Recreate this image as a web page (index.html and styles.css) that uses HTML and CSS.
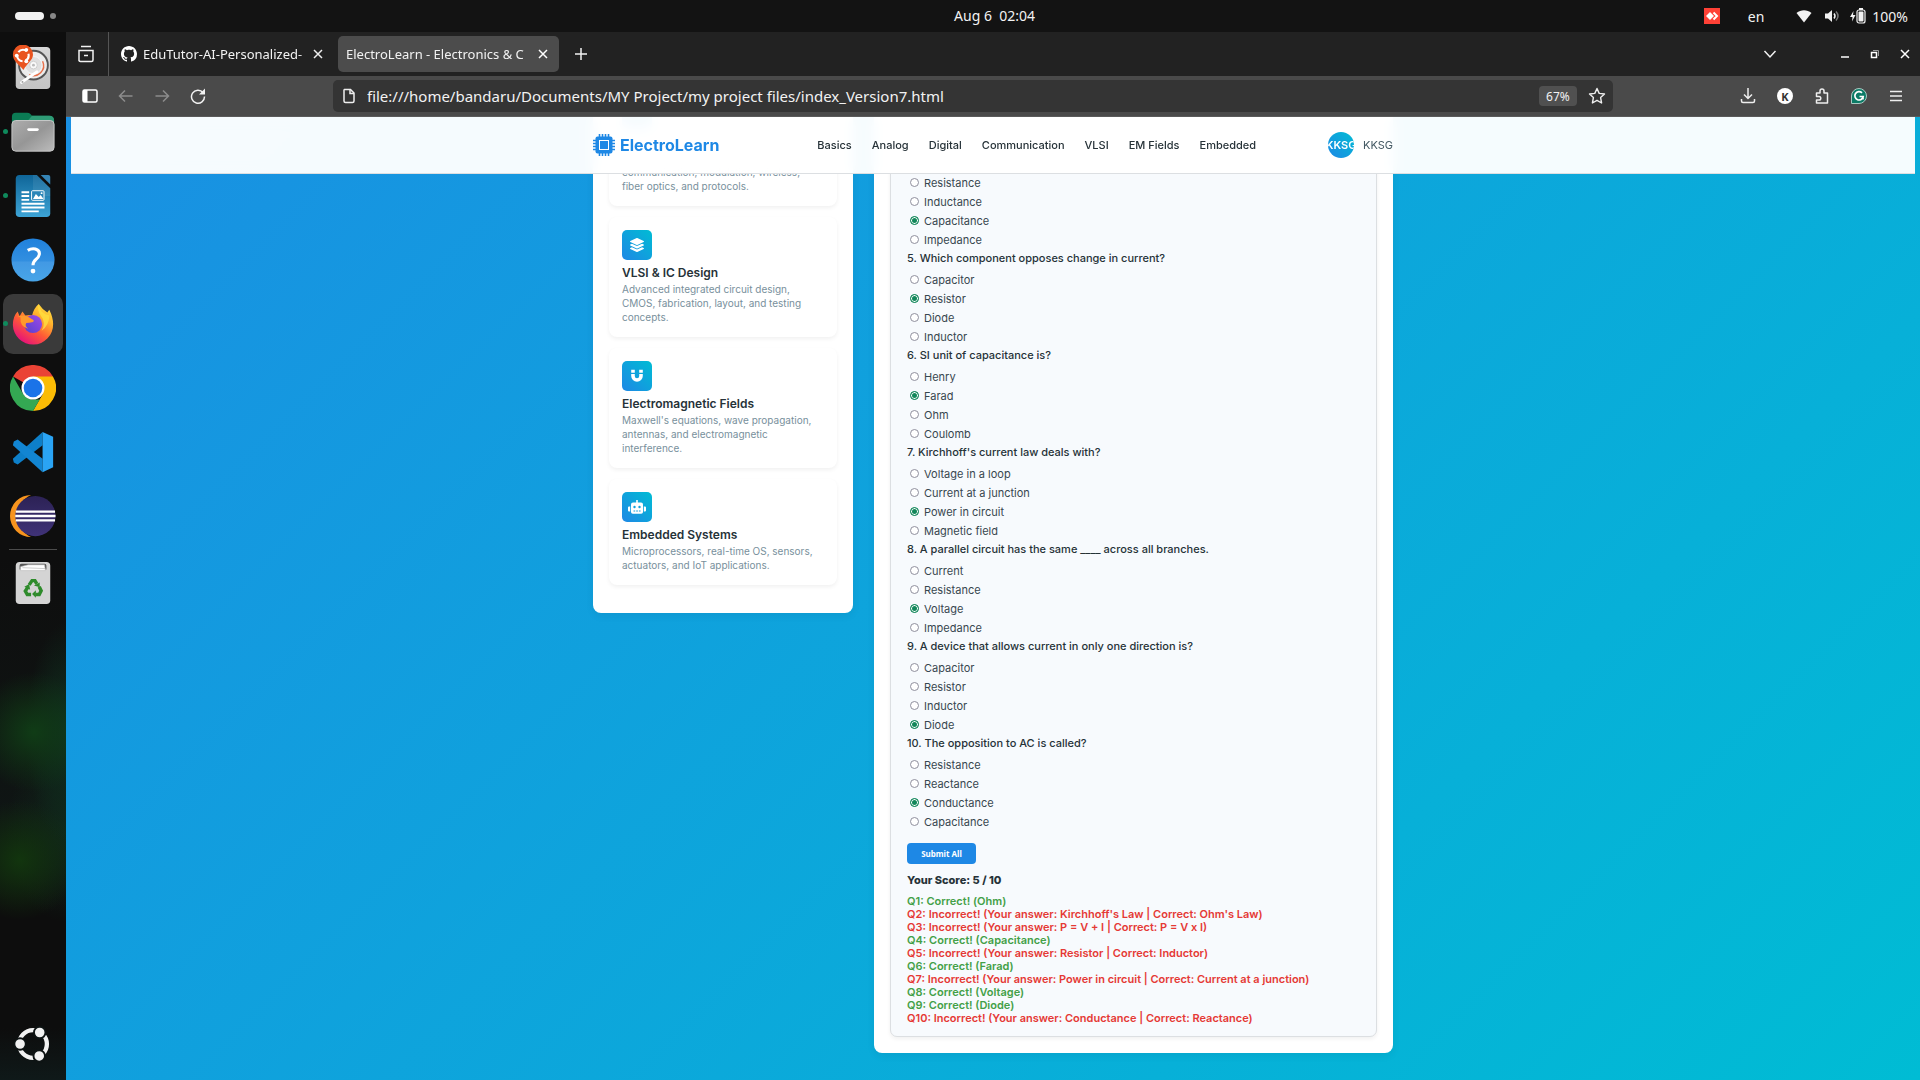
FILE: index.html
```html
<!DOCTYPE html>
<html lang="en">
<head>
<meta charset="utf-8">
<title>ElectroLearn - Electronics &amp; Communication</title>
<link rel="stylesheet" href="styles.css">
</head>
<body>
<div class="topbar">
  <button class="workspaces" aria-label="Workspaces"><span class="pill"></span><span class="dot"></span></button>
  <time class="clock">Aug 6 &nbsp;02:04</time>
  <div class="tray">
    <svg class="tray-app" width="16" height="16" viewBox="0 0 16 16"><path fill="#ff4136" d="M0 0h16v16H0z"/><path fill="#fff" d="M6 4l4 4-4 4-4-4z"/><path fill="none" stroke="#fff" stroke-width="2" d="M9.500 4.500L13 8l-3.500 3.500"/></svg>
    <span class="lang">en</span>
    <svg width="16" height="16" viewBox="0 0 16 16"><path fill="#f2f2f2" d="M.5 5C5 1.300 11 1.300 15.500 5L8 14.500z"/></svg>
    <svg class="volume" width="16" height="16" viewBox="0 0 16 16"><path fill="#f2f2f2" d="M1 5.500h3L8 2v12L4 10.500H1z"/><path fill="none" stroke="#f2f2f2" stroke-width="1.500" d="M10 5.500q2 2.500 0 5"/><path fill="none" stroke="#777" stroke-width="1.500" d="M12 3.500q4 4.500 0 9"/></svg>
    <svg class="battery" width="16" height="16" viewBox="0 0 16 16"><path fill="#f2f2f2" d="M3.500 3L0 9h2.500L2 13.500 5.500 7H3z"/><rect x="7" y="2" width="8" height="13" rx="2" fill="none" stroke="#f2f2f2" stroke-width="1.200"/><rect x="8.500" y="3.500" width="5" height="10" rx="1" fill="#f2f2f2"/><path fill="#f2f2f2" d="M9 0h4v2H9z"/></svg>
    <span class="percent">100%</span>
  </div>
</div>
<div class="desktop">
  <nav class="dock" aria-label="Dock">
    <button class="dock-item" aria-label="Disk"><svg width="48" height="48" viewBox="0 0 48 48"><defs><linearGradient id="metal" x2="0" y2="1"><stop stop-color="#d6d6d6"/><stop offset="1" stop-color="#c4c4c4"/></linearGradient></defs><rect x="6" y="2" width="36" height="44" rx="4" fill="url(#metal)"/><circle cx="24.500" cy="21" r="15" fill="#ececec" stroke="#555" stroke-width="2"/><circle cx="24.500" cy="21" r="9" fill="#e0e0e0" stroke="#f5f5f5"/><path d="M34 17a10.500 10.500 0 0 1-14 14" fill="none" stroke="#e9704a" stroke-width="1.500"/><circle cx="24.500" cy="21" r="4" fill="#fafafa" stroke="#ccc"/><circle cx="24.500" cy="21" r="1.500" fill="#bbb"/><path d="M12 39l16-11" stroke="#fff" stroke-width="3" stroke-linecap="round"/><circle cx="13" cy="38.500" r="1" fill="#999"/><path d="M14 26C9 20 3 17 3 10a10.500 10.500 0 0 1 21 0c0 6-6 9-10 16z" fill="#e95420"/><circle cx="13.500" cy="11" r="6" fill="none" stroke="#fff" stroke-width="2.200" stroke-dasharray="9.600 3" stroke-dashoffset="3"/><circle cx="7" cy="11" r="2" fill="#fff"/><circle cx="17" cy="5" r="2" fill="#fff"/><circle cx="17" cy="17" r="2" fill="#fff"/></svg></button>
    <button class="dock-item running" aria-label="Files"><svg width="48" height="48" viewBox="0 0 48 48"><defs><linearGradient id="folder" x2="1" y2="1"><stop stop-color="#adadad"/><stop offset=".5" stop-color="#969696"/><stop offset="1" stop-color="#bcbcbc"/></linearGradient></defs><path d="M2 20V8q0-4 4-4h12q2 0 3 1l2 2h18q5 0 5 5v10z" fill="#0b7b54"/><path d="M23 7h18q5 0 5 5v8H20l-4-5z" fill="#2f9c76"/><rect x="2" y="12" width="44" height="32" rx="4" fill="url(#folder)" stroke="#c9c9c9"/><rect x="18" y="20" width="12" height="3" rx="1.500" fill="#fff"/></svg></button>
    <button class="dock-item running" aria-label="Writer"><svg width="48" height="48" viewBox="0 0 48 48"><defs><linearGradient id="doc" x2="0" y2="1"><stop stop-color="#0f6598"/><stop offset="1" stop-color="#3da4d6"/></linearGradient></defs><path d="M10 2h18l14 14v26q0 4-4 4H10q-4 0-4-4V6q0-4 4-4z" fill="url(#doc)"/><path d="M24 2h4l14 14v8H24z" fill="#fff" opacity=".08"/><path d="M32 2h8q2 0 2 2v8z" fill="#3584b5"/><path d="M12 20h8M12 24h8M12 28h8M12 32h24M12 36h24M12 40h18" stroke="#fff" stroke-width="2"/><rect x="22.500" y="18.500" width="13" height="10" rx="1" fill="#2b86b8" stroke="#fff"/><path d="M24 27l3-5 3 3 2-2 3 4z" fill="#fff"/><circle cx="33" cy="21" r="1" fill="#fff"/></svg></button>
    <button class="dock-item" aria-label="Help"><svg width="48" height="48" viewBox="0 0 48 48"><defs><linearGradient id="help" x2="0" y2="1"><stop stop-color="#2081dc"/><stop offset=".53" stop-color="#328fe0"/><stop offset=".54" stop-color="#4299e4"/><stop offset="1" stop-color="#48a5e8"/></linearGradient></defs><circle cx="24" cy="24" r="22.500" fill="url(#help)"/><path d="M18.500 14q4-2.500 8-1.500 5 1.500 4 6-.500 2.500-3.500 5t-3 6" fill="none" stroke="#fff" stroke-width="3.200"/><circle cx="24" cy="35.500" r="2.500" fill="#fff"/></svg></button>
    <button class="dock-item running current" aria-label="Firefox"><svg width="48" height="48" viewBox="0 0 48 48"><defs><linearGradient id="fox" x1="1" y1="0" x2=".3" y2="1"><stop stop-color="#fff04a"/><stop offset=".35" stop-color="#ffb42c"/><stop offset=".65" stop-color="#ff5a36"/><stop offset="1" stop-color="#e5107c"/></linearGradient><linearGradient id="globe" x1="1" x2="0" y2="1"><stop stop-color="#a04ae8"/><stop offset="1" stop-color="#5440ce"/></linearGradient></defs><path d="M30 3q4 6 9 9 1-2 2-3 4 8 4 15A21 21 0 0 1 3 25q0-9 5-14l2 5 3-5 3 4q4-1 7 0 2-8 7-12z" fill="url(#fox)"/><circle cx="24" cy="24" r="9.500" fill="url(#globe)"/><path d="M8 16q8-3 15 3 3 1 1 3-4 1-7 1-2 3 2 6-9-2-8-12z" fill="#ff9a2c"/><path d="M30 3q-2 6 2 12 6 7 1 16 8-6 8-16-3 0-8-4-2-3-3-8z" fill="#ffdf3f" opacity=".8"/></svg></button>
    <button class="dock-item" aria-label="Chrome"><svg width="48" height="48" viewBox="0 0 48 48"><path fill="#ea4335" d="M24 24L3.200 12a24 24 0 0 1 41.600 0z"/><path fill="#fbbc05" d="M24 24V12h20.800A24 24 0 0 1 24 48l10.400-18z"/><path fill="#34a853" d="M3.200 12L13.600 30q4 6 10.400 6h7L24 48A24 24 0 0 1 3.200 12z"/><circle cx="24" cy="24" r="12" fill="#fff"/><circle cx="24" cy="24" r="9.700" fill="#1a73e8"/></svg></button>
    <button class="dock-item" aria-label="VS Code"><svg width="48" height="48" viewBox="0 0 48 48"><path fill="#0d7fc9" d="M34 3L3 31l1 4 4 2 26-20z"/><path fill="#1285d2" d="M34 45L3 17l1-4 4-2 26 20z"/><path fill="#2aa4f4" d="M34 3l11 5v32l-11 5z"/></svg></button>
    <button class="dock-item" aria-label="Eclipse"><svg width="48" height="48" viewBox="0 0 48 48"><defs><linearGradient id="ecl" x2="0" y2="1"><stop stop-color="#2c2255"/><stop offset="1" stop-color="#3f3277"/></linearGradient></defs><path fill="#f7941e" d="M22 2A22 22 0 0 0 22 46 24 24 0 0 1 22 2z"/><circle cx="26.500" cy="24" r="21" fill="url(#ecl)"/><path d="M6 19.500h41M5.500 24h42M6 28.500h41" stroke="#fff" stroke-width="2.400"/></svg></button>
    <hr class="dock-rule">
    <button class="dock-item" aria-label="Trash"><svg width="48" height="48" viewBox="0 0 48 48"><rect x="6" y="2" width="36" height="44" rx="4" fill="#d4d4d4"/><path d="M10 10V6q0-2 2-2h24q2 0 2 2v4z" fill="#555"/><path d="M11 11V7l8-2h17l1 6z" fill="#fff" stroke="#bbb" stroke-width=".6"/><path d="M13 8l24 1" stroke="#aaa" stroke-width=".6"/><g fill="none" stroke="#2e8b2b" stroke-width="3.600"><path d="M20 26l3-4.500h3l2 3.500"/><path d="M30.500 28l2 4-2 4h-4"/><path d="M22 36h-4l-2-3.500 2.500-4"/></g><path fill="#2e8b2b" d="M25 26.500l6-3v5zM27 31.500v8l-4-4zM15 28l5-3 1 6z"/></svg></button>
    <button class="dock-item apps" aria-label="Show apps"><svg width="48" height="48" viewBox="0 0 48 48"><circle cx="24" cy="24" r="14.500" fill="none" stroke="#f2f2f2" stroke-width="4.500"/><g fill="#f2f2f2" stroke="#0e1414" stroke-width="2"><circle cx="10.500" cy="24" r="6"/><circle cx="31" cy="12" r="6"/><circle cx="30.500" cy="36.500" r="6"/></g></svg></button>
  </nav>

  <div class="browser">
    <div class="tabstrip">
      <button class="tab-overview" aria-label="Firefox View"><svg width="18" height="18" viewBox="0 0 18 18" fill="none" stroke="#f2f2f2" stroke-width="1.500"><path d="M4 1.500h10M2 16V5.500h14V15q0 1.500-1.500 1.500h-11Q2 16.500 2 15z"/><path d="M7 10.500h4"/></svg></button>
      <div class="tab">
        <svg width="16" height="16" viewBox="0 0 16 16"><path fill="#fff" d="M8 0C3.580 0 0 3.580 0 8c0 3.540 2.290 6.530 5.470 7.590.4.070.55-.17.55-.38 0-.19-.01-.82-.01-1.490-2.010.37-2.530-.49-2.690-.94-.09-.23-.48-.94-.82-1.130-.28-.15-.68-.52-.01-.53.63-.01 1.080.58 1.230.82.72 1.210 1.870.87 2.330.66.070-.52.28-.87.51-1.070-1.780-.2-3.640-.89-3.640-3.950 0-.87.31-1.590.82-2.150-.08-.2-.36-1.020.08-2.120 0 0 .67-.21 2.200.82.64-.18 1.320-.27 2-.27s1.360.09 2 .27c1.530-1.040 2.200-.82 2.200-.82.44 1.100.16 1.920.08 2.120.51.56.82 1.270.82 2.150 0 3.070-1.870 3.750-3.650 3.950.29.25.54.73.54 1.480 0 1.070-.01 1.930-.01 2.200 0 .21.15.46.55.38A8.010 8.010 0 0 0 16 8c0-4.420-3.580-8-8-8z"/></svg>
        <span class="tab-title">EduTutor-AI-Personalized-</span>
        <button class="tab-close" aria-label="Close tab"><svg width="10" height="10" viewBox="0 0 10 10"><path d="M1 1l8 8M9 1L1 9" stroke="#eee" stroke-width="1.500"/></svg></button>
      </div>
      <div class="tab active">
        <span class="tab-title">ElectroLearn - Electronics &amp; C</span>
        <button class="tab-close" aria-label="Close tab"><svg width="10" height="10" viewBox="0 0 10 10"><path d="M1 1l8 8M9 1L1 9" stroke="#fff" stroke-width="1.500"/></svg></button>
      </div>
      <button class="tab-new" aria-label="New tab"><svg width="14" height="14" viewBox="0 0 14 14"><path d="M7 1v12M1 7h12" stroke="#f2f2f2" stroke-width="1.500"/></svg></button>
      <div class="window-controls">
        <button class="tab-list" aria-label="List all tabs"><svg width="14" height="14" viewBox="0 0 14 14"><path d="M1.500 4L7 10l5.500-6" fill="none" stroke="#f2f2f2" stroke-width="1.500"/></svg></button>
        <button aria-label="Minimize"><svg width="10" height="10" viewBox="0 0 10 10"><path d="M1 8h8" stroke="#fff" stroke-width="1.500"/></svg></button>
        <button aria-label="Restore"><svg width="10" height="10" viewBox="0 0 10 10"><path d="M1.500 3.500h5v5h-5z" fill="none" stroke="#fff" stroke-width="1.500"/><path d="M3 1.500h5.500V7" fill="none" stroke="#999"/></svg></button>
        <button aria-label="Close"><svg width="10" height="10" viewBox="0 0 10 10"><path d="M1 1l8 8M9 1L1 9" stroke="#fff" stroke-width="1.500"/></svg></button>
      </div>
    </div>
    <div class="toolbar">
      <div class="tools-left">
        <button aria-label="Sidebar"><svg width="16" height="16" viewBox="0 0 16 16"><rect x="1" y="2" width="14" height="12" rx="1.500" fill="none" stroke="#fff" stroke-width="1.500"/><path fill="#fff" d="M1 2h4.500v12H1z"/></svg></button>
        <button aria-label="Back"><svg width="16" height="16" viewBox="0 0 16 16" fill="none" stroke="#8c8c8c" stroke-width="1.500"><path d="M1.500 8h13M7 2.500L1.500 8 7 13.500"/></svg></button>
        <button aria-label="Forward"><svg width="16" height="16" viewBox="0 0 16 16" fill="none" stroke="#8c8c8c" stroke-width="1.500"><path d="M14.500 8h-13M9 2.500L14.500 8 9 13.500"/></svg></button>
        <button aria-label="Reload"><svg width="16" height="16" viewBox="0 0 16 16"><path d="M13 4.500A6.500 6.500 0 1 0 14.500 8.500" fill="none" stroke="#f2f2f2" stroke-width="1.500"/><path fill="#f2f2f2" d="M15 .5v6H9z"/></svg></button>
      </div>
      <div class="urlbar">
        <svg width="16" height="16" viewBox="0 0 16 16" fill="none" stroke="#eee" stroke-width="1.500"><path d="M3.500 1.500h6L13 5v8q0 1.500-1.500 1.500h-7Q3 14.500 3 13V2z"/><path d="M9 1.500V5.500h4"/></svg>
        <input class="url" type="text" aria-label="Address" value="file:///home/bandaru/Documents/MY Project/my project files/index_Version7.html">
        <button class="zoom">67%</button>
        <button class="star" aria-label="Bookmark"><svg width="18" height="18" viewBox="0 0 18 18"><path d="M9 1.500l2.200 4.900 5.300.6-3.900 3.600 1 5.400L9 13.300 4.400 16l1-5.400L1.500 7l5.300-.6z" fill="none" stroke="#eee" stroke-width="1.400" stroke-linejoin="round"/></svg></button>
      </div>
      <div class="tools-right">
        <button aria-label="Downloads"><svg width="16" height="16" viewBox="0 0 16 16" fill="none" stroke="#eee" stroke-width="1.500"><path d="M8 0v10.500M4 6.500l4 4 4-4M1.500 11v2q0 1.500 1.500 1.500h10q1.500 0 1.500-1.500v-2"/></svg></button>
        <button class="account" aria-label="Account">K</button>
        <button aria-label="Extensions"><svg width="16" height="16" viewBox="0 0 16 16" fill="none" stroke="#eee" stroke-width="1.500"><path d="M6 5V3a2 2 0 0 1 4 0v2h3.500v10h-11v-3H5a1.800 1.800 0 0 0 0-3.600H2.500V5z" stroke-linejoin="round"/></svg></button>
        <button aria-label="Grammarly"><svg width="16" height="16" viewBox="0 0 16 16"><path d="M.5 15.500V8A7.500 7.500 0 1 1 8 15.500z" fill="#0b7b66" stroke="#a9c9c2"/><path d="M11 4.800A4.200 4.200 0 1 0 12.200 8.500H8.500M12 8.500v3" fill="none" stroke="#fff" stroke-width="1.700"/></svg></button>
        <button aria-label="Menu"><svg width="16" height="16" viewBox="0 0 16 16"><path d="M2 3.500h12M2 8h12M2 12.500h12" stroke="#eee" stroke-width="1.400"/></svg></button>
      </div>
    </div>

    <div class="page">
      <header class="site-header">
        <div class="site-bar">
          <a class="brand" href="#">
            <svg width="22" height="22" viewBox="0 0 22 22"><path d="M6.500 0v22M9.500 0v22M12.500 0v22M15.500 0v22M0 6.500h22M0 9.500h22M0 12.500h22M0 15.500h22" stroke="#1e88e5" stroke-width="1.600"/><rect x="2.500" y="2.500" width="17" height="17" rx="2" fill="#1e88e5"/><rect x="6.500" y="6.500" width="9" height="9" fill="#1e88e5" stroke="#fff" stroke-width="1"/></svg>
            ElectroLearn
          </a>
          <nav class="site-nav">
            <a href="#">Basics</a><a href="#">Analog</a><a href="#">Digital</a><a href="#">Communication</a><a href="#">VLSI</a><a href="#">EM Fields</a><a href="#">Embedded</a>
          </nav>
          <div class="user"><span class="avatar">KKSG</span><span>KKSG</span></div>
        </div>
      </header>

      <main class="layout">
        <aside class="panel topics">
          <article class="topic scrolled">
            <span class="topic-icon"></span>
            <p>communication, modulation, wireless, fiber optics, and protocols.</p>
          </article>
          <article class="topic">
            <span class="topic-icon"><svg width="14" height="14" viewBox="0 0 512 512"><path fill="#fff" d="M12.410 148.020l232.940 105.670c6.800 3.090 14.490 3.090 21.290 0l232.940-105.670c16.550-7.510 16.550-32.520 0-40.030L266.650 2.310a25.607 25.607 0 0 0-21.290 0L12.410 107.980c-16.550 7.510-16.550 32.530 0 40.040zm487.180 88.280l-58.090-26.330-161.640 73.270c-7.560 3.430-15.590 5.170-23.860 5.170s-16.290-1.740-23.860-5.170L70.510 209.970l-58.100 26.330c-16.550 7.500-16.550 32.500 0 40l232.940 105.590c6.800 3.080 14.490 3.080 21.290 0L499.590 276.300c16.550-7.500 16.550-32.500 0-40zm0 127.800l-57.870-26.230-161.860 73.370c-7.560 3.430-15.590 5.170-23.860 5.170s-16.290-1.740-23.860-5.170L70.290 337.870 12.410 364.100c-16.550 7.500-16.550 32.500 0 40l232.940 105.590c6.800 3.080 14.490 3.080 21.290 0L499.590 404.100c16.550-7.500 16.550-32.500 0-40z"/></svg></span>
            <h3>VLSI &amp; IC Design</h3>
            <p>Advanced integrated circuit design, CMOS, fabrication, layout, and testing concepts.</p>
          </article>
          <article class="topic">
            <span class="topic-icon"><svg width="14" height="14" viewBox="0 0 14 14"><path d="M3 5v2a4 4 0 0 0 8 0V5" fill="none" stroke="#fff" stroke-width="3.600"/><path d="M1.200 .8h3.600v3H1.200zM9.200 .8h3.600v3H9.200z" fill="#fff"/></svg></span>
            <h3>Electromagnetic Fields</h3>
            <p>Maxwell's equations, wave propagation, antennas, and electromagnetic interference.</p>
          </article>
          <article class="topic">
            <span class="topic-icon"><svg width="18" height="14" viewBox="0 0 18 14"><path fill="#fff" d="M8.200 0h1.600v2.500H13q2 0 2 2V12q0 1.800-1.800 1.800H4.800Q3 13.800 3 12V4.500q0-2 2-2h3.200zM0 7.500Q0 6.500 1 6.500h1.200v5H1q-1 0-1-1zM18 7.500q0-1-1-1h-1.200v5H17q1 0 1-1z"/><circle cx="6.500" cy="7" r="1.200" fill="#11a0de"/><circle cx="11.500" cy="7" r="1.200" fill="#11a0de"/><path d="M5.500 11h1.700M8.200 11h1.700M10.900 11h1.700" stroke="#11a0de"/></svg></span>
            <h3>Embedded Systems</h3>
            <p>Microprocessors, real-time OS, sensors, actuators, and IoT applications.</p>
          </article>
        </aside>

        <section class="panel quiz-panel">
          <form class="quiz">
            <fieldset>
              <label><input type="radio" name="q4">Resistance</label>
              <label><input type="radio" name="q4">Inductance</label>
              <label><input type="radio" name="q4" checked>Capacitance</label>
              <label><input type="radio" name="q4">Impedance</label>
            </fieldset>
            <fieldset>
              <legend>5. Which component opposes change in current?</legend>
              <label><input type="radio" name="q5">Capacitor</label>
              <label><input type="radio" name="q5" checked>Resistor</label>
              <label><input type="radio" name="q5">Diode</label>
              <label><input type="radio" name="q5">Inductor</label>
            </fieldset>
            <fieldset>
              <legend>6. SI unit of capacitance is?</legend>
              <label><input type="radio" name="q6">Henry</label>
              <label><input type="radio" name="q6" checked>Farad</label>
              <label><input type="radio" name="q6">Ohm</label>
              <label><input type="radio" name="q6">Coulomb</label>
            </fieldset>
            <fieldset>
              <legend>7. Kirchhoff's current law deals with?</legend>
              <label><input type="radio" name="q7">Voltage in a loop</label>
              <label><input type="radio" name="q7">Current at a junction</label>
              <label><input type="radio" name="q7" checked>Power in circuit</label>
              <label><input type="radio" name="q7">Magnetic field</label>
            </fieldset>
            <fieldset>
              <legend>8. A parallel circuit has the same ____ across all branches.</legend>
              <label><input type="radio" name="q8">Current</label>
              <label><input type="radio" name="q8">Resistance</label>
              <label><input type="radio" name="q8" checked>Voltage</label>
              <label><input type="radio" name="q8">Impedance</label>
            </fieldset>
            <fieldset>
              <legend>9. A device that allows current in only one direction is?</legend>
              <label><input type="radio" name="q9">Capacitor</label>
              <label><input type="radio" name="q9">Resistor</label>
              <label><input type="radio" name="q9">Inductor</label>
              <label><input type="radio" name="q9" checked>Diode</label>
            </fieldset>
            <fieldset>
              <legend>10. The opposition to AC is called?</legend>
              <label><input type="radio" name="q10">Resistance</label>
              <label><input type="radio" name="q10">Reactance</label>
              <label><input type="radio" name="q10" checked>Conductance</label>
              <label><input type="radio" name="q10">Capacitance</label>
            </fieldset>
            <button class="submit" type="button">Submit All</button>
            <p class="score">Your Score: 5 / 10</p>
            <div class="results">
              <p class="right">Q1: Correct! (Ohm)</p>
              <p class="wrong">Q2: Incorrect! (Your answer: Kirchhoff's Law | Correct: Ohm's Law)</p>
              <p class="wrong">Q3: Incorrect! (Your answer: P = V + I | Correct: P = V x I)</p>
              <p class="right">Q4: Correct! (Capacitance)</p>
              <p class="wrong">Q5: Incorrect! (Your answer: Resistor | Correct: Inductor)</p>
              <p class="right">Q6: Correct! (Farad)</p>
              <p class="wrong">Q7: Incorrect! (Your answer: Power in circuit | Correct: Current at a junction)</p>
              <p class="right">Q8: Correct! (Voltage)</p>
              <p class="right">Q9: Correct! (Diode)</p>
              <p class="wrong">Q10: Incorrect! (Your answer: Conductance | Correct: Reactance)</p>
            </div>
          </form>
        </section>
      </main>
    </div>
  </div>
</div>
</body>
</html>
```
FILE: styles.css
```css
* { box-sizing: border-box; margin: 0; padding: 0; }
body {
  height: 100vh;
  display: flex;
  flex-direction: column;
  overflow: hidden;
  background: #131313;
  font-family: "Noto Sans", sans-serif;
  font-size: 14px;
  color: #f2f2f2;
}
button { border: 0; background: none; color: inherit; font: inherit; display: flex; align-items: center; justify-content: center; }
svg { display: block; flex: none; }
a { color: inherit; text-decoration: none; }

/* System bar */
.topbar {
  flex: none;
  height: 32px;
  padding: 0 12px 0 15px;
  display: grid;
  grid-template-columns: 1fr auto 1fr;
  align-items: center;
}
.workspaces { justify-self: start; gap: 6px; }
.pill { width: 29px; height: 8px; border-radius: 4px; background: #f2f2f2; }
.dot { width: 6px; height: 6px; border-radius: 50%; background: #888; }
.clock { padding-left: 66px; line-height: 32px; }
.tray { justify-self: end; display: flex; align-items: center; }
.lang { margin: 0 32px 0 28px; }
.volume { margin: 0 10px 0 12px; }
.percent { margin-left: 6px; }

/* Dock */
.desktop { flex: 1; min-height: 0; display: flex; }
.dock {
  flex: none;
  width: 66px;
  padding: 4px 0;
  display: flex;
  flex-direction: column;
  background:
    radial-gradient(60px 60px at 34px 700px, #103c16, transparent),
    radial-gradient(40px 110px at 66px 700px, #10301f, transparent),
    radial-gradient(60px 60px at 20px 828px, #12350e, transparent),
    radial-gradient(60px 90px at 66px 800px, #10261a, transparent),
    linear-gradient(#0e0e0e 50%, #0f1514 75%, #0d0d0d 84%, #0d0d0d 95%, #0f1919);
}
.dock-item { position: relative; flex: none; height: 64px; }
.dock-item svg { width: 46px; height: 46px; }
.dock-item.running::before {
  content: "";
  position: absolute;
  left: 3px;
  top: 29px;
  width: 5px;
  height: 5px;
  border-radius: 50%;
  background: #0f8a5c;
}
.dock-item.current { height: 60px; margin: 2px 3px; border-radius: 10px; background: #3a3a3a; }
.dock-item.current::before { left: 0; top: 27px; }
.dock-rule { border: 0; height: 1px; margin: 1px 9px; background: #4c4c4c; }
.apps { margin-top: auto; }

/* Browser chrome */
.browser { flex: 1; min-width: 0; display: flex; flex-direction: column; }
.tabstrip { flex: none; height: 44px; display: flex; align-items: center; background: #222; }
.tab-overview { width: 43px; height: 44px; padding-right: 3px; border-right: 1px solid #555; }
.tab {
  width: 221px;
  height: 36px;
  margin-left: 4px;
  padding: 0 11px 0 8px;
  display: flex;
  align-items: center;
  gap: 6px;
  border-radius: 5px;
}
.tab.active { background: #4c4c4c; }
.tab-title {
  flex: 1;
  min-width: 0;
  overflow: hidden;
  white-space: nowrap;
  font-size: 13px;
  mask-image: linear-gradient(90deg, #000 calc(100% - 12px), transparent);
}
.tab-close { margin-left: -4px; }
.tab-new { width: 44px; height: 36px; }
.window-controls { margin-left: auto; display: flex; gap: 20px; padding-right: 10px; }
.tab-list { margin-right: 43px; }
.toolbar {
  flex: none;
  height: 41px;
  padding: 0 16px;
  display: flex;
  align-items: center;
  background: #4a4a4a;
  border-bottom: 1px solid #5a5a5a;
}
.tools-left, .tools-right { display: flex; gap: 20px; }
.tools-left { flex: 25; }
.tools-right { flex: 29; justify-content: flex-end; gap: 21px; }
.urlbar {
  flex: 0 1 1280px;
  min-width: 0;
  height: 32px;
  padding: 0 7px 0 8px;
  display: flex;
  align-items: center;
  border-radius: 5px;
  background: #343434;
}
.url {
  flex: 1;
  min-width: 0;
  height: 32px;
  margin: 0 10px;
  border: 0;
  outline: 0;
  background: none;
  color: #f2f2f2;
  font: 15px "Noto Sans", sans-serif;
}
.zoom { width: 38px; height: 20px; border-radius: 4px; background: #505050; font-size: 12px; }
.star { margin-left: 11px; }
.account { width: 16px; height: 16px; border-radius: 50%; background: #fff; color: #333; font-size: 11px; font-weight: 700; }

/* Web page */
.page {
  flex: 1;
  min-height: 0;
  overflow: hidden;
  background: linear-gradient(135deg, #1e88e5, #00bcd4) bottom / 100% calc(100% + 480px) no-repeat;
  font-family: "Inter", sans-serif;
  font-size: 11px;
  color: #263238;
}
.site-header {
  position: sticky;
  top: 0;
  z-index: 2;
  height: 57px;
  margin: 0 5px;
  background: rgba(255, 255, 255, .96);
  backdrop-filter: blur(7px);
  border-bottom: 1px solid #dcdfe2;
}
.site-bar { max-width: 800px; height: 55px; margin: 0 auto; display: flex; align-items: center; }
.brand { display: flex; align-items: center; gap: 5px; font-size: 16px; font-weight: 700; color: #1e88e5; }
.site-nav { margin-left: auto; display: flex; gap: 20px; font-weight: 500; }
.user { margin-left: 72px; display: flex; align-items: center; gap: 9px; color: #455a64; }
.avatar {
  width: 26px;
  height: 26px;
  display: flex;
  align-items: center;
  justify-content: center;
  overflow: hidden;
  border-radius: 50%;
  background: linear-gradient(45deg, #1e88e5, #00bcd4);
  color: #fff;
  font-weight: 600;
}
.layout {
  max-width: 800px;
  margin: -104px auto 0;
  display: grid;
  grid-template-columns: 260px minmax(0, 1fr);
  gap: 21px;
  align-items: start;
}
.panel { padding: 16px; border-radius: 8px; background: #fff; box-shadow: 0 3px 8px rgba(0, 0, 0, .06); }
.topics { display: flex; flex-direction: column; gap: 11px; padding-bottom: 28px; }
.topic { padding: 13px; border-radius: 8px; background: #fff; box-shadow: 0 2px 4px rgba(0, 0, 0, .06); }
.topic.scrolled { height: 120px; display: flex; flex-direction: column; justify-content: space-between; }
.topic-icon {
  width: 30px;
  height: 30px;
  display: flex;
  align-items: center;
  justify-content: center;
  border-radius: 5px;
  background: linear-gradient(45deg, #1e88e5, #00bcd4);
}
.topic h3 { margin-top: 5px; font-size: 12px; line-height: 16px; font-weight: 600; }
.topic p { font-size: 10px; line-height: 14px; color: #78909c; }
.topic h3 + p { margin-top: 1px; }

.quiz {
  padding: 86px 16px 11px;
  border: 1px solid #dcdfe2;
  border-radius: 7px;
  background: #f7fafd;
  box-shadow: 0 2px 4px rgba(0, 0, 0, .06);
}
.quiz fieldset { border: 0; }
.quiz legend { margin-bottom: 3px; line-height: 18px; font-weight: 500; }
.quiz label { height: 19px; padding-left: 3px; display: flex; align-items: center; gap: 5px; color: #37474f; }
.quiz input {
  appearance: none;
  width: 9px;
  height: 9px;
  border: 1px solid #8f8f9d;
  border-radius: 50%;
  background: #fff;
}
.quiz input:checked { border-color: #12875a; background: #12875a; box-shadow: inset 0 0 0 1px #fff; }
.submit {
  margin-top: 12px;
  width: 69px;
  height: 21px;
  border-radius: 4px;
  background: #1e88e5;
  color: #fff;
  font: 700 8px "Noto Sans", sans-serif;
}
.score { margin: 9px 0 8px; line-height: 14px; font-weight: 800; }
.results p { line-height: 13px; font-weight: 600; }
.right { color: #43a047; }
.wrong { color: #e53935; }
```
